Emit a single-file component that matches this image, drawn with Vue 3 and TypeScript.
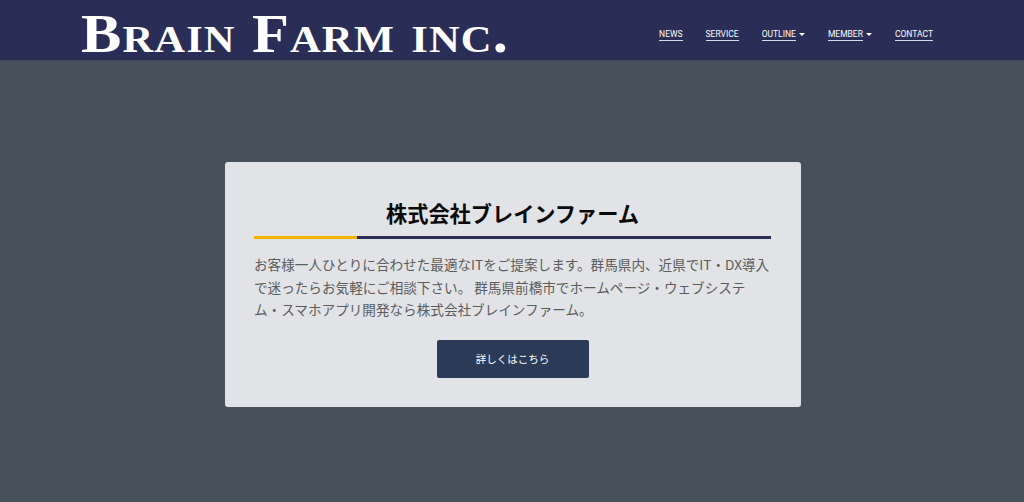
<script setup lang="ts">
interface NavItem { label: string; caret: boolean }
const nav: NavItem[] = [
  { label: 'NEWS', caret: false },
  { label: 'SERVICE', caret: false },
  { label: 'OUTLINE', caret: true },
  { label: 'MEMBER', caret: true },
  { label: 'CONTACT', caret: false },
]
</script>

<template>
  <div class="page">
    <header class="header">
      <a class="logo" href="#">Brain Farm inc.</a>
      <nav class="nav">
        <a v-for="item in nav" :key="item.label" class="nav-item" href="#">
          <span class="nav-label">{{ item.label }}</span>
          <span v-if="item.caret" class="caret"></span>
        </a>
      </nav>
    </header>
    <main class="main">
      <section class="card">
        <h1 class="title">株式会社ブレインファーム</h1>
        <div class="rule"><span class="rule-accent"></span></div>
        <p class="text">お客様一人ひとりに合わせた最適なITをご提案します。群馬県内、近県でIT・DX導入で迷ったらお気軽にご相談下さい。 群馬県前橋市でホームページ・ウェブシステム・スマホアプリ開発なら株式会社ブレインファーム。</p>
        <a class="button" href="#">詳しくはこちら</a>
      </section>
    </main>
  </div>
</template>

<style>
html, body { margin: 0; background: #47515b; }
</style>

<style scoped>
.page {
  height: 502px;
  display: flex;
  flex-direction: column;
  background: #47515b;
  font-family: "Noto Sans CJK JP", "Liberation Sans", sans-serif;
  overflow: hidden;
}
.header {
  height: 60px;
  flex: none;
  background: #2a2d55;
  border-bottom: 1px solid #3f4a57;
  display: flex;
  align-items: center;
  justify-content: space-between;
  padding: 0 91px 0 81px;
}
.logo {
  font-family: "Liberation Serif", serif;
  font-weight: 700;
  font-size: 54px;
  font-variant: small-caps;
  line-height: 60px;
  margin-top: 8px;
  color: #fff;
  text-decoration: none;
  white-space: nowrap;
  transform: scaleX(1.12);
  transform-origin: left center;
  letter-spacing: 1px;
}
.nav {
  display: flex;
  align-items: center;
  gap: 23px;
  margin-top: 9px;
}
.nav-item {
  font-family: Roboto, sans-serif;
  font-size: 8.5px;
  line-height: 12px;
  color: #fff;
  display: flex;
  align-items: center;
  text-decoration: none;
}
.nav-label { border-bottom: 1px solid #d8d9e4; }
.caret {
  width: 0;
  height: 0;
  margin-left: 3px;
  border-left: 3px solid transparent;
  border-right: 3px solid transparent;
  border-top: 3px solid #fff;
}
.main {
  flex: 1;
  display: flex;
  justify-content: center;
  padding: 101px 0 0 2px;
}
.card {
  width: 576px;
  height: 245px;
  box-sizing: border-box;
  padding: 36px 30px 0 29px;
  background: #e1e3e6;
  border-radius: 3px;
  display: flex;
  flex-direction: column;
  align-items: center;
}
.title {
  margin: 0;
  font-size: 21.2px;
  line-height: 30px;
  font-weight: 700;
  color: #0a0a0a;
  text-align: center;
}
.rule {
  width: 100%;
  height: 3px;
  margin-top: 8px;
  background: #2a2d55;
}
.rule-accent {
  display: block;
  width: 20%;
  height: 100%;
  background: #f5b000;
}
.text {
  width: 100%;
  margin: 14px 0 0;
  font-size: 13.6px;
  line-height: 22.5px;
  color: #5c5c5c;
}
.button {
  margin-top: 19px;
  width: 152px;
  height: 38px;
  display: flex;
  align-items: center;
  justify-content: center;
  background: #2b3a56;
  border-radius: 2px;
  color: #fff;
  font-size: 10.5px;
  text-decoration: none;
}
</style>
